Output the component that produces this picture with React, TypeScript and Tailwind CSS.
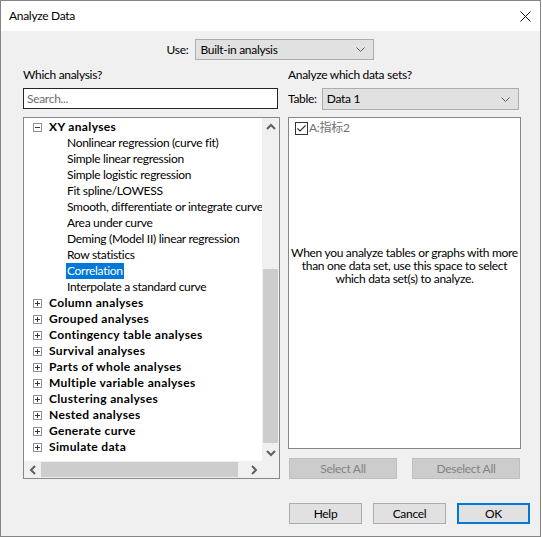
import React from 'react';

const font = { fontFamily: 'Lato, "Noto Sans CJK SC", sans-serif' };

const xyChildren = [
  'Nonlinear regression (curve fit)',
  'Simple linear regression',
  'Simple logistic regression',
  'Fit spline/LOWESS',
  'Smooth, differentiate or integrate curve',
  'Area under curve',
  'Deming (Model II) linear regression',
  'Row statistics',
  'Correlation',
  'Interpolate a standard curve',
];

const groups = [
  'Column analyses',
  'Grouped analyses',
  'Contingency table analyses',
  'Survival analyses',
  'Parts of whole analyses',
  'Multiple variable analyses',
  'Clustering analyses',
  'Nested analyses',
  'Generate curve',
  'Simulate data',
];

function Chevron({ dir }: { dir: 'up' | 'down' | 'left' | 'right' }) {
  const d = {
    up: 'M1 6 L5 2 L9 6',
    down: 'M1 2 L5 6 L9 2',
    left: 'M6 1 L2 5 L6 9',
    right: 'M2 1 L6 5 L2 9',
  }[dir];
  const vert = dir === 'up' || dir === 'down';
  return (
    <svg width={vert ? 10 : 8} height={vert ? 8 : 10} viewBox={vert ? '0 0 10 8' : '0 0 8 10'}>
      <path d={d} fill="none" stroke="#606060" strokeWidth="2" />
    </svg>
  );
}

function ExpandBox({ open }: { open: boolean }) {
  return (
    <svg width="9" height="9" viewBox="0 0 9 9" className="shrink-0">
      <rect x="0.5" y="0.5" width="8" height="8" fill="#fff" stroke="#919191" />
      <path d="M2 4.5 H7" stroke="#1f3b6f" strokeWidth="1" />
      {!open && <path d="M4.5 2 V7" stroke="#1f3b6f" strokeWidth="1" />}
    </svg>
  );
}

function DropSelect({ value, width }: { value: string; width: string }) {
  return (
    <div className={`${width} h-full flex items-center justify-between bg-[#e1e1e1] border border-[#adadad] pl-[4px] pr-[8px] text-[12px] text-black`}>
      <span>{value}</span>
      <svg width="9" height="5" viewBox="0 0 9 5">
        <path d="M0.5 0.5 L4.5 4.5 L8.5 0.5" fill="none" stroke="#5a5a5a" strokeWidth="1" />
      </svg>
    </div>
  );
}

function Btn({ label, disabled, primary, width }: { label: string; disabled?: boolean; primary?: boolean; width: string }) {
  let cls = 'bg-[#e1e1e1] border border-[#adadad] text-black';
  if (disabled) cls = 'bg-[#cccccc] border border-[#bfbfbf] text-[#838383]';
  if (primary) cls = 'bg-[#e1e1e1] border-2 border-[#0078d7] text-black';
  return (
    <div className={`${width} h-[21px] flex items-center justify-center text-[12px] ${cls}`}>{label}</div>
  );
}

export default function App() {
  return (
    <div className="w-[542px] h-[537px] bg-white tracking-[-0.3px]" style={font}>
      <div className="w-[541px] h-[537px] border border-[#858585] bg-[#f0f0f0] flex flex-col">
        {/* Title bar */}
        <div className="h-[30px] bg-white flex items-center justify-between pl-[8px] pr-[9px] shrink-0">
          <span className="text-[12px] text-black">Analyze Data</span>
          <svg width="11" height="11" viewBox="0 0 11 11">
            <path d="M0.5 0.5 L10.5 10.5 M10.5 0.5 L0.5 10.5" stroke="#111" strokeWidth="1" />
          </svg>
        </div>

        {/* Use row */}
        <div className="mt-[8px] h-[21px] flex items-center justify-center gap-[7px]">
          <span className="text-[12px] text-black">Use:</span>
          <DropSelect value="Built-in analysis" width="w-[179px]" />
        </div>

        {/* Columns */}
        <div className="flex pl-[22px] gap-[8px]">
          {/* Left column */}
          <div className="w-[257px] flex flex-col">
            <div className="h-[28px] flex items-center pt-[2px] text-[12px] text-black">Which analysis?</div>
            <div className="w-[255px] h-[21px] border border-[#262626] bg-white flex items-center pl-[3px] text-[12px] text-[#6d6d6d]">
              Search...
            </div>
            <div className="mt-[8px] h-[362px] border border-[#828790] bg-white flex flex-col">
              <div className="flex-1 flex min-h-0">
                <div className="flex-1 overflow-hidden pt-[1px] text-[12px] text-black">
                  <div className="h-[16px] flex items-center pl-[9px] gap-[7px] whitespace-nowrap">
                    <ExpandBox open />
                    <span className="font-bold tracking-[0.35px]">XY analyses</span>
                  </div>
                  {xyChildren.map((c) => (
                    <div key={c} className="h-[16px] flex items-center pl-[42px] whitespace-nowrap">
                      <span className={c === 'Correlation' ? 'bg-[#0078d7] text-white px-[1px] h-[16px] flex items-center' : 'px-[1px]'}>{c}</span>
                    </div>
                  ))}
                  {groups.map((g) => (
                    <div key={g} className="h-[16px] flex items-center pl-[9px] gap-[7px] whitespace-nowrap">
                      <ExpandBox open={false} />
                      <span className="font-bold tracking-[0.35px]">{g}</span>
                    </div>
                  ))}
                </div>
                {/* vertical scrollbar */}
                <div className="w-[17px] bg-[#f0f0f0] flex flex-col">
                  <div className="h-[17px] flex items-center justify-center"><Chevron dir="up" /></div>
                  <div className="flex-1 flex flex-col pt-[134px] pb-[1px]">
                    <div className="mx-[1px] flex-1 bg-[#cdcdcd]" />
                  </div>
                  <div className="h-[17px] flex items-center justify-center"><Chevron dir="down" /></div>
                </div>
              </div>
              {/* horizontal scrollbar */}
              <div className="h-[17px] flex bg-[#f0f0f0]">
                <div className="w-[17px] flex items-center justify-center"><Chevron dir="left" /></div>
                <div className="w-[197px] my-[1px] bg-[#cdcdcd]" />
                <div className="flex-1" />
                <div className="w-[17px] flex items-center justify-center"><Chevron dir="right" /></div>
                <div className="w-[17px]" />
              </div>
            </div>
          </div>

          {/* Right column */}
          <div className="w-[233px] flex flex-col">
            <div className="h-[28px] flex items-center pt-[2px] text-[12px] text-black">Analyze which data sets?</div>
            <div className="h-[22px] flex items-center gap-[5px]">
              <span className="text-[12px] text-black">Table:</span>
              <DropSelect value="Data 1" width="w-[197px]" />
            </div>
            <div className="mt-[7px] h-[332px] border border-[#828790] bg-white flex flex-col">
              <div className="flex items-center pl-[6px] pt-[3px] gap-[1px]">
                <svg width="13" height="13" viewBox="0 0 13 13">
                  <rect x="0.5" y="0.5" width="12" height="12" fill="#fff" stroke="#333" />
                  <path d="M2.5 6.5 L5 9 L10.5 3.5" fill="none" stroke="#333" strokeWidth="1.2" />
                </svg>
                <span className="text-[12px] leading-[14px] text-[#707070]">A:指标2</span>
              </div>
              <div className="mt-[111px] text-center text-[12px] leading-[13px] text-black whitespace-nowrap">
                When you analyze tables or graphs with more<br />
                than one data set, use this space to select<br />
                which data set(s) to analyze.
              </div>
            </div>
            <div className="mt-[9px] pl-[1px] flex gap-[15px]">
              <Btn label="Select All" disabled width="w-[108px]" />
              <Btn label="Deselect All" disabled width="w-[108px]" />
            </div>
          </div>
        </div>

        {/* Bottom buttons */}
        <div className="mt-[24px] flex justify-end gap-[11px] pr-[10px]">
          <Btn label="Help" width="w-[73px]" />
          <Btn label="Cancel" width="w-[73px]" />
          <Btn label="OK" primary width="w-[73px]" />
        </div>
      </div>
    </div>
  );
}
